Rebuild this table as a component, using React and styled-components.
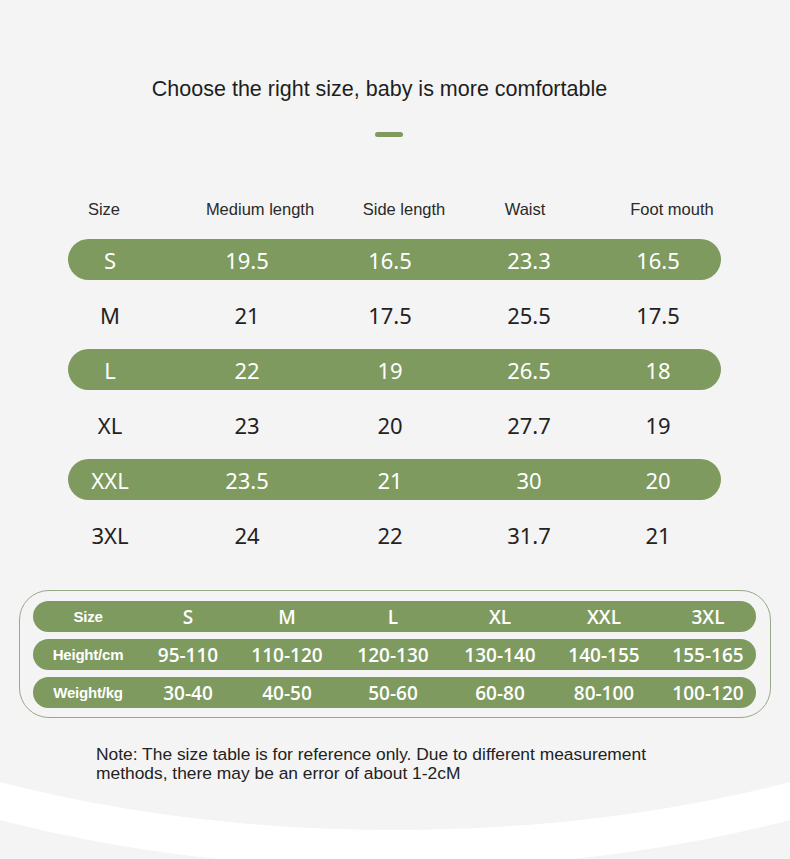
import styled, { createGlobalStyle } from "styled-components";

const green = "#7e9a5f";
const pageBg = "#f4f4f4";

const sizeRows = [
  ["S", "19.5", "16.5", "23.3", "16.5"],
  ["M", "21", "17.5", "25.5", "17.5"],
  ["L", "22", "19", "26.5", "18"],
  ["XL", "23", "20", "27.7", "19"],
  ["XXL", "23.5", "21", "30", "20"],
  ["3XL", "24", "22", "31.7", "21"],
];

const heads = ["Size", "Medium length", "Side length", "Waist", "Foot mouth"];

const fitRows = [
  ["Size", "S", "M", "L", "XL", "XXL", "3XL"],
  ["Height/cm", "95-110", "110-120", "120-130", "130-140", "140-155", "155-165"],
  ["Weight/kg", "30-40", "40-50", "50-60", "60-80", "80-100", "100-120"],
];

// turn a list of column centres into cell widths, so each cell's text sits on its centre
const spans = (centers) => {
  let edge = 0;
  return centers.map((c) => {
    const w = 2 * (c - edge);
    edge += w;
    return w;
  });
};

const headSpans = spans([36, 192, 336, 457, 604]);
const dataSpans = spans([42, 179, 322, 461, 590]);
const fitSpans = spans([55, 155, 254, 360, 467, 571, 675]);

const GlobalStyle = createGlobalStyle`
  html, body {
    margin: 0;
    padding: 0;
    background: ${pageBg};
  }
`;

const Page = styled.div`
  position: relative;
  width: 790px;
  height: 859px;
  box-sizing: border-box;
  padding-top: 75px;
  overflow: hidden;
  background: ${pageBg};
  font-family: "Liberation Sans", Arial, sans-serif;
  color: #222;

  &::before,
  &::after {
    content: "";
    position: absolute;
    left: -405px;
    width: 1600px;
    height: 736px;
    border-radius: 50%;
  }

  &::before {
    top: 132px;
    background: #fff;
  }

  &::after {
    top: 94px;
    background: ${pageBg};
  }
`;

const Content = styled.div`
  position: relative;
  z-index: 1;
`;

const Title = styled.h1`
  margin: 0;
  padding-right: 31px;
  text-align: center;
  font-size: 21.5px;
  line-height: 28px;
  font-weight: 400;
  color: #1e1e1e;
`;

const Dash = styled.div`
  width: 28px;
  height: 5px;
  margin: 29px 0 0 375px;
  border-radius: 3px;
  background: ${green};
`;

const Table = styled.div`
  display: flex;
  flex-direction: column;
  gap: 14px;
  margin: 57px 69px 0 68px;
`;

const HeadRow = styled.div`
  display: flex;
  align-items: center;
  height: 30px;
  margin-bottom: 1px;
  font-size: 16.5px;
  color: #2a2a2a;
`;

const Row = styled.div`
  display: flex;
  align-items: center;
  height: 41px;
  border-radius: 21px;
  background: ${(p) => (p.$filled ? green : "transparent")};
  color: ${(p) => (p.$filled ? "#fff" : "#222")};
  font-family: "Noto Sans", "Open Sans", sans-serif;
  font-weight: 400;
  font-size: 22px;
`;

const Cell = styled.div`
  flex: none;
  width: ${(p) => p.$w}px;
  display: flex;
  justify-content: center;
  white-space: nowrap;
`;

const FitBox = styled.div`
  display: flex;
  flex-direction: column;
  gap: 7px;
  margin: 35px 19px 0 19px;
  padding: 10px 14px 9px 13px;
  border: 1px solid #98a987;
  border-radius: 30px;
`;

const FitRow = styled.div`
  display: flex;
  align-items: center;
  height: 31px;
  border-radius: 16px;
  background: ${green};
  color: #fff;
  font-family: "Open Sans", "Noto Sans", sans-serif;
  font-weight: 600;
  font-size: 19px;
`;

const FitLabel = styled(Cell)`
  font-family: "Liberation Sans", Arial, sans-serif;
  font-weight: 700;
  font-size: 15px;
  letter-spacing: -0.2px;
`;

const Note = styled.p`
  margin: 27px 0 0 96px;
  font-size: 17.4px;
  line-height: 19px;
  color: #222;
`;

export default function App() {
  return (
    <>
      <GlobalStyle />
      <Page>
        <Content>
          <Title>Choose the right size, baby is more comfortable</Title>
          <Dash />

          <Table>
            <HeadRow>
              {heads.map((h, i) => (
                <Cell key={h} $w={headSpans[i]}>
                  {h}
                </Cell>
              ))}
            </HeadRow>
            {sizeRows.map((row, r) => (
              <Row key={row[0]} $filled={r % 2 === 0}>
                {row.map((v, i) => (
                  <Cell key={i} $w={dataSpans[i]}>
                    {v}
                  </Cell>
                ))}
              </Row>
            ))}
          </Table>

          <FitBox>
            {fitRows.map((row) => (
              <FitRow key={row[0]}>
                <FitLabel $w={fitSpans[0]}>{row[0]}</FitLabel>
                {row.slice(1).map((v, i) => (
                  <Cell key={i} $w={fitSpans[i + 1]}>
                    {v}
                  </Cell>
                ))}
              </FitRow>
            ))}
          </FitBox>

          <Note>
            Note: The size table is for reference only. Due to different measurement
            <br />
            methods, there may be an error of about 1-2cM
          </Note>
        </Content>
      </Page>
    </>
  );
}
